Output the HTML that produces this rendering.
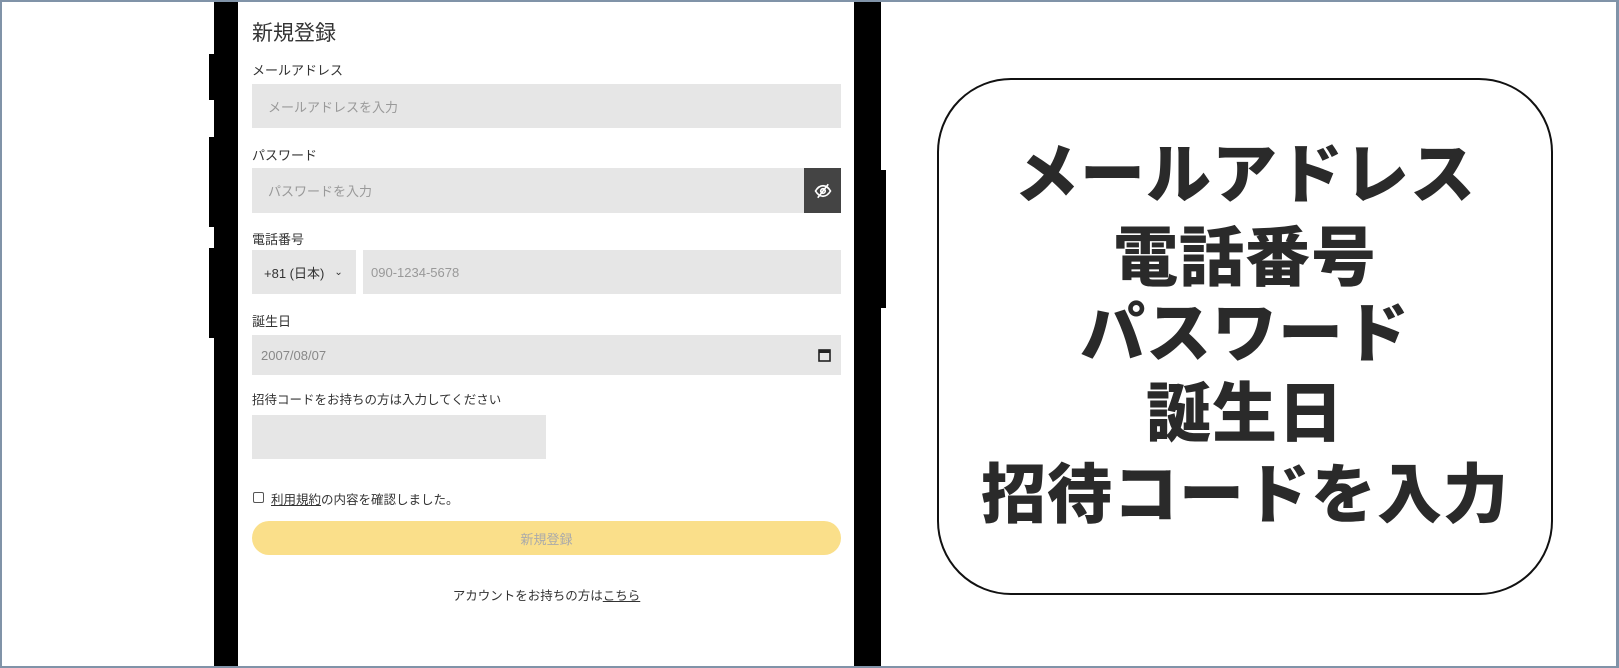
<!DOCTYPE html>
<html><head><meta charset="utf-8"><style>
*{box-sizing:border-box;margin:0;padding:0}
body{width:1619px;height:668px;overflow:hidden;background:#fff;position:relative;font-family:"Liberation Sans","Noto Sans CJK JP",sans-serif;color:#333}
.frame{position:absolute;left:0;top:0;width:1619px;height:668px;border:2px solid #8093a8;border-right-width:3px;z-index:10;pointer-events:none}
.abs{position:absolute}
.bezel{background:#000}
.in{position:absolute;background:#e6e6e6;font-size:13px;color:#999;display:flex;align-items:center;padding-left:16px}
.lbl{position:absolute;left:252px;font-size:13px;color:#333}
.box{position:absolute;left:937px;top:78px;width:616px;height:517px;border:2px solid #111;border-radius:74px}
.big{position:absolute;left:937px;width:616px;text-align:center;font-family:"Noto Sans CJK JP",sans-serif;font-weight:900;font-size:65px;color:#2a2a2a;line-height:80px;letter-spacing:1px}
</style></head><body>
<div class="frame"></div>
<div class="abs bezel" style="left:214px;top:0;width:24px;height:668px"></div>
<div class="abs bezel" style="left:854px;top:0;width:27px;height:668px"></div>
<div class="abs" style="left:238px;top:0;width:616px;height:668px;background:#fff"></div>
<div class="abs bezel" style="left:209px;top:54px;width:5px;height:46px"></div>
<div class="abs bezel" style="left:209px;top:137px;width:5px;height:90px"></div>
<div class="abs bezel" style="left:209px;top:248px;width:5px;height:90px"></div>
<div class="abs bezel" style="left:881px;top:170px;width:5px;height:138px"></div>

<div class="abs" style="left:252px;top:17px;font-size:21px;color:#333">新規登録</div>
<div class="lbl" style="top:60px">メールアドレス</div>
<div class="in" style="left:252px;top:84px;width:589px;height:44px">メールアドレスを入力</div>
<div class="lbl" style="top:145px">パスワード</div>
<div class="in" style="left:252px;top:168px;width:552px;height:45px">パスワードを入力</div>
<div class="abs" style="left:804px;top:168px;width:37px;height:45px;background:#444;display:flex;align-items:center;justify-content:center">
<svg width="18" height="18" viewBox="0 0 24 24" fill="none" stroke="#fff" stroke-width="2.2"><path d="M2 12c3-5 7-7 10-7s7 2 10 7c-3 5-7 7-10 7s-7-2-10-7z"/><circle cx="12" cy="12" r="3"/><path d="M5 21L19 3"/></svg></div>
<div class="lbl" style="top:229px">電話番号</div>
<div class="in" style="left:252px;top:250px;width:104px;height:44px;color:#333;padding-left:12px">+81 (日本)<span style="margin-left:10px;font-size:10px">&#x2304;</span></div>
<div class="in" style="left:363px;top:250px;width:478px;height:44px;padding-left:8px">090-1234-5678</div>
<div class="lbl" style="top:311px">誕生日</div>
<div class="in" style="left:252px;top:335px;width:589px;height:40px;padding-left:9px;color:#888">2007/08/07
<svg class="abs" style="right:10px;top:13px" width="13" height="14" viewBox="0 0 13 14"><rect x="1" y="2" width="11" height="11" fill="none" stroke="#222" stroke-width="1.6"/><rect x="1" y="2" width="11" height="3" fill="#222"/></svg></div>
<div class="lbl" style="top:389px;font-size:12.5px">招待コードをお持ちの方は入力してください</div>
<div class="in" style="left:252px;top:415px;width:294px;height:44px"></div>
<div class="abs" style="left:253px;top:492px;width:11px;height:11px;border:1px solid #555;border-radius:2px"></div>
<div class="abs" style="left:271px;top:489px;font-size:12.5px;color:#333"><u>利用規約</u>の内容を確認しました。</div>
<div class="abs" style="left:252px;top:521px;width:589px;height:34px;border-radius:17px;background:#fadf8a;color:#aaa;font-size:13px;display:flex;align-items:center;justify-content:center">新規登録</div>
<div class="abs" style="left:252px;top:585px;width:589px;text-align:center;font-size:12.5px;color:#333">アカウントをお持ちの方は<u>こちら</u></div>

<div class="box"></div>
<div class="big" style="top:129px">メールアドレス</div>
<div class="big" style="top:212px">電話番号</div>
<div class="big" style="top:288px">パスワード</div>
<div class="big" style="top:368px">誕生日</div>
<div class="big" style="top:449px">招待コードを入力</div>
</body></html>
